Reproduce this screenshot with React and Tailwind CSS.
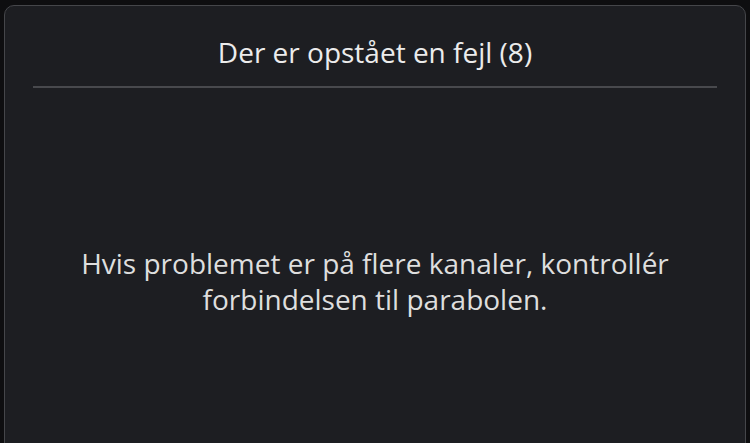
export default function App() {
  return (
    <div className="w-[750px] h-[443px] bg-[#0e0e10] overflow-hidden pt-[5px] px-[4px]" style={{ fontFamily: '"Open Sans", sans-serif' }}>
      <div className="h-[460px] rounded-t-[10px] border border-[#45464a] bg-[#1d1e22] flex flex-col">
        <div className="h-[80px] pt-[12px] flex items-center justify-center text-[28px] text-[#ececec]">
          Der er opstået en fejl (8)
        </div>
        <div className="mx-[28px] h-[2px] bg-[#48494d]" />
        <div className="mt-[157px] text-center text-[28px] leading-[36px] text-[#dedede]">
          Hvis problemet er på flere kanaler, kontrollér<br />forbindelsen til parabolen.
        </div>
      </div>
    </div>
  );
}
